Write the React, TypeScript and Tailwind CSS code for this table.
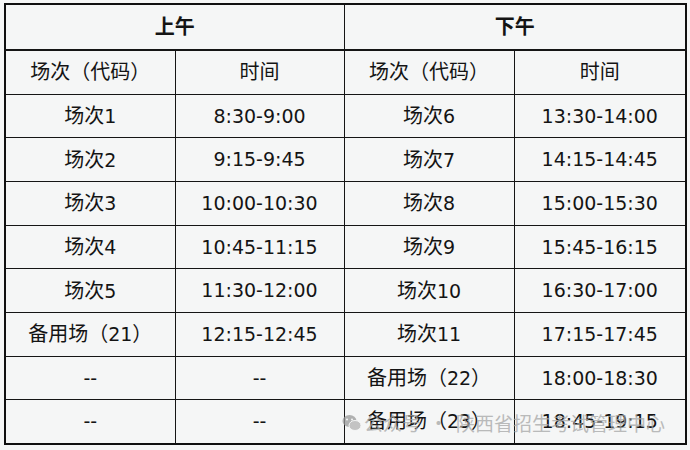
const morning = [
  ["场次1", "8:30-9:00"],
  ["场次2", "9:15-9:45"],
  ["场次3", "10:00-10:30"],
  ["场次4", "10:45-11:15"],
  ["场次5", "11:30-12:00"],
  ["备用场（21）", "12:15-12:45"],
  ["--", "--"],
  ["--", "--"],
];

const afternoon = [
  ["场次6", "13:30-14:00"],
  ["场次7", "14:15-14:45"],
  ["场次8", "15:00-15:30"],
  ["场次9", "15:45-16:15"],
  ["场次10", "16:30-17:00"],
  ["场次11", "17:15-17:45"],
  ["备用场（22）", "18:00-18:30"],
  ["备用场（23）", "18:45-19:15"],
];

const cell = "border border-[#151515] text-center align-middle p-0";

// CJK runs a touch larger than the digits, like the source table
function Mixed({ text }: { text: string }) {
  const parts = text.split(/([\u3000-\u9fff\uff00-\uffef]+)/).filter(Boolean);
  return (
    <>
      {parts.map((p, i) =>
        /[\u3000-\u9fff\uff00-\uffef]/.test(p) ? (
          <span key={i} className="text-[20px]">{p}</span>
        ) : (
          <span key={i}>{p}</span>
        )
      )}
    </>
  );
}

function WeChatIcon() {
  return (
    <svg width="20" height="18" viewBox="0 0 20 18" fill="#9a9a9a">
      <ellipse cx="7.5" cy="7" rx="7" ry="6" />
      <ellipse cx="13" cy="11.5" rx="6" ry="5" fill="#b3b3b3" stroke="#f5f6f6" strokeWidth="1" />
      <circle cx="5" cy="5.5" r="1" fill="#f5f6f6" />
      <circle cx="10" cy="5.5" r="1" fill="#f5f6f6" />
    </svg>
  );
}

export default function App() {
  return (
    <div
      className="relative w-[690px] h-[450px] bg-[#f5f6f6] pt-[3px] pl-[4px] text-[#141414]"
      style={{ fontFamily: '"DejaVu Sans", "Noto Sans CJK SC", sans-serif' }}
    >
      <table className="table-fixed border-collapse border-2 border-[#101010] w-[681px] text-[19px]">
        <colgroup>
          <col className="w-[170px]" />
          <col className="w-[169px]" />
          <col className="w-[170px]" />
          <col className="w-[172px]" />
        </colgroup>
        <tbody>
          <tr className="h-[46px]">
            <td colSpan={2} className={`${cell} border-b-2 font-bold text-[20px]`}>上午</td>
            <td colSpan={2} className={`${cell} border-b-2 font-bold text-[20px]`}>下午</td>
          </tr>
          <tr className="h-[44px]">
            <td className={cell}><Mixed text="场次（代码）" /></td>
            <td className={cell}><Mixed text="时间" /></td>
            <td className={cell}><Mixed text="场次（代码）" /></td>
            <td className={cell}><Mixed text="时间" /></td>
          </tr>
          {morning.map((m, i) => (
            <tr key={i} className="h-[43.7px]">
              <td className={cell}><Mixed text={m[0]} /></td>
              <td className={cell}>{m[1]}</td>
              <td className={cell}><Mixed text={afternoon[i][0]} /></td>
              <td className={cell}>{afternoon[i][1]}</td>
            </tr>
          ))}
        </tbody>
      </table>

      {/* watermark */}
      <div
        className="absolute left-[342px] top-[409px] flex items-center opacity-75 pointer-events-none text-[#a6a6a6] text-[19px] whitespace-nowrap"
        style={{ fontFamily: '"Noto Sans CJK SC", sans-serif' }}
      >
        <WeChatIcon />
        <span className="ml-[2px]">公众号</span>
        <span className="mx-[8px]">·</span>
        <span>陕西省招生考试管理中心</span>
      </div>
    </div>
  );
}
